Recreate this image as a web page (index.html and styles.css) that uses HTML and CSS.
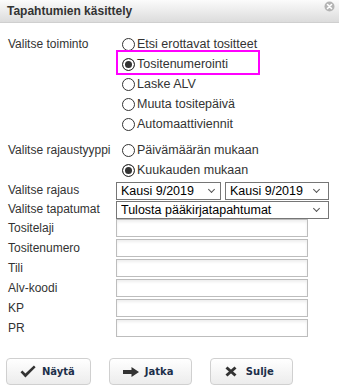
FILE: index.html
```html
<!DOCTYPE html>
<html lang="fi">
<head>
    <meta charset="UTF-8">
    <meta name="viewport" content="width=device-width, initial-scale=1.0">
    <title>Tapahtumien käsittely</title>
    <link rel="stylesheet" href="styles.css">
</head>
<body>

    <div class="titlebar">
        <span class="title">Tapahtumien käsittely</span>
        <svg class="close" width="11" height="11" viewBox="0 0 11 11">
            <circle cx="5.5" cy="5.5" r="5" fill="#b4b4b4"/>
            <path d="M3.5 3.5 L7.5 7.5 M7.5 3.5 L3.5 7.5" stroke="#fff" stroke-width="1.6" stroke-linecap="round"/>
        </svg>
    </div>

    <div class="form">
        <div class="row">
            <div class="row-label">Valitse toiminto</div>
            <div class="options">
                <label class="option"><input type="radio" name="toiminto">Etsi erottavat tositteet</label>
                <label class="option highlight"><input type="radio" name="toiminto" checked>Tositenumerointi</label>
                <label class="option"><input type="radio" name="toiminto">Laske ALV</label>
                <label class="option"><input type="radio" name="toiminto">Muuta tositepäivä</label>
                <label class="option"><input type="radio" name="toiminto">Automaattiviennit</label>
            </div>
        </div>

        <div class="row group">
            <div class="row-label">Valitse rajaustyyppi</div>
            <div class="options">
                <label class="option"><input type="radio" name="rajaus">Päivämäärän mukaan</label>
                <label class="option"><input type="radio" name="rajaus" checked>Kuukauden mukaan</label>
            </div>
        </div>

        <div class="row select-row">
            <div class="row-label short">Valitse rajaus</div>
            <span class="select from"><select><option>Kausi 9/2019</option></select></span>
            <span class="select to"><select><option>Kausi 9/2019</option></select></span>
        </div>

        <div class="row select-row">
            <div class="row-label short">Valitse tapatumat</div>
            <span class="select wide"><select><option>Tulosta pääkirjatapahtumat</option></select></span>
        </div>

        <div class="row field-row first">
            <div class="row-label short">Tositelaji</div>
            <input type="text" class="field">
        </div>
        <div class="row field-row">
            <div class="row-label short">Tositenumero</div>
            <input type="text" class="field">
        </div>
        <div class="row field-row">
            <div class="row-label short">Tili</div>
            <input type="text" class="field">
        </div>
        <div class="row field-row">
            <div class="row-label short">Alv-koodi</div>
            <input type="text" class="field">
        </div>
        <div class="row field-row">
            <div class="row-label short">KP</div>
            <input type="text" class="field">
        </div>
        <div class="row field-row">
            <div class="row-label short">PR</div>
            <input type="text" class="field">
        </div>
    </div>

    <div class="buttons">
        <button class="btn">
            <svg class="icon" width="16" height="13" viewBox="0 0 16 13">
                <path d="M0.5 7.2 L2.4 5.4 L5.4 8.6 L13.9 0.6 L15.6 2.3 L5.4 12.4 Z" fill="#333"/>
            </svg>
            Näytä
        </button>
        <button class="btn">
            <svg class="icon" width="16" height="10" viewBox="0 0 16 10">
                <path d="M0 3 L8.5 3 L8.5 0 L16 5 L8.5 10 L8.5 7 L0 7 Z" fill="#333"/>
            </svg>
            Jatka
        </button>
        <button class="btn">
            <svg class="icon" width="16" height="11" viewBox="0 0 16 11">
                <path d="M2.5 1.5 L11.5 9.5 M11.5 1.5 L2.5 9.5" stroke="#333" stroke-width="3"/>
            </svg>
            Sulje
        </button>
    </div>

</body>
</html>
```

FILE: styles.css
```css
body {
    margin: 0;
    font-family: "Liberation Sans", Arial, sans-serif;
    background: #fff;
    color: #333;
}
.titlebar {
    height: 22px;
    display: flex;
    justify-content: space-between;
    align-items: center;
    padding: 0 4px 0 7px;
    background: linear-gradient(#fbfbfb, #dcdcdc);
    border-bottom: 1px solid #cfcfcf;
}
.title {
    font-size: 12px;
    font-weight: bold;
    color: #333;
}
.close {
    align-self: flex-start;
    margin-top: 1px;
}
.form {
    padding: 11px 0 0 8px;
}
.row {
    display: flex;
}
.row-label {
    width: 108px;
    font-size: 12px;
    line-height: 20px;
}
.row-label.short {
    line-height: 18px;
}
.options {
    display: flex;
    flex-direction: column;
}
.option {
    position: relative;
    height: 20px;
    display: flex;
    align-items: center;
    font-size: 12.5px;
    color: #333;
}
.option input {
    appearance: none;
    width: 13px;
    height: 13px;
    margin: 0 2px 0 6px;
    border: 1px solid #333;
    border-radius: 50%;
    background: #fff;
}
.option input:checked {
    background: #333;
    box-shadow: inset 0 0 0 2px #fff;
}
.highlight::after {
    content: "";
    position: absolute;
    left: 0;
    top: -4px;
    width: 144px;
    height: 25px;
    border: 2px solid #f0f;
    box-sizing: border-box;
}
.group {
    margin-top: 6px;
}
.select-row {
    margin-top: 1px;
}
.select {
    position: relative;
    display: inline-block;
    height: 18px;
}
.select select {
    appearance: none;
    width: 100%;
    height: 18px;
    margin: 0;
    padding: 0 0 0 4px;
    border: 1px solid #767676;
    border-radius: 0;
    background: #fff;
    color: #000;
    font-family: "Liberation Sans", Arial, sans-serif;
    font-size: 12.5px;
}
.select::after {
    content: "";
    position: absolute;
    right: 10px;
    top: 6px;
    width: 4px;
    height: 4px;
    border-right: 1px solid #555;
    border-bottom: 1px solid #555;
    transform: rotate(45deg);
}
.select.from {
    width: 105px;
}
.select.from::after {
    right: 7px;
}
.select.to {
    width: 104px;
    margin-left: 4px;
}
.select.wide {
    width: 213px;
}
.field-row {
    margin-top: 2px;
}
.field-row.first {
    margin-top: 1px;
}
.field {
    width: 192px;
    height: 18px;
    margin: 0;
    box-sizing: border-box;
    border: 1px solid #bdbdbd;
    box-shadow: inset 0 2px 3px rgba(0, 0, 0, 0.07);
    background: #fff;
}
.buttons {
    display: flex;
    gap: 18px;
    margin-top: 21px;
    padding-left: 6px;
}
.btn {
    min-width: 83px;
    height: 27px;
    display: flex;
    align-items: center;
    gap: 6px;
    padding: 0 15px 0 13px;
    border: 1px solid #d0d0d0;
    border-radius: 4px;
    background: linear-gradient(#ffffff, #ececec);
    font-family: "DejaVu Sans", Verdana, sans-serif;
    font-size: 10px;
    font-weight: bold;
    color: #1c2f4a;
}
.icon {
    flex: none;
}
```
